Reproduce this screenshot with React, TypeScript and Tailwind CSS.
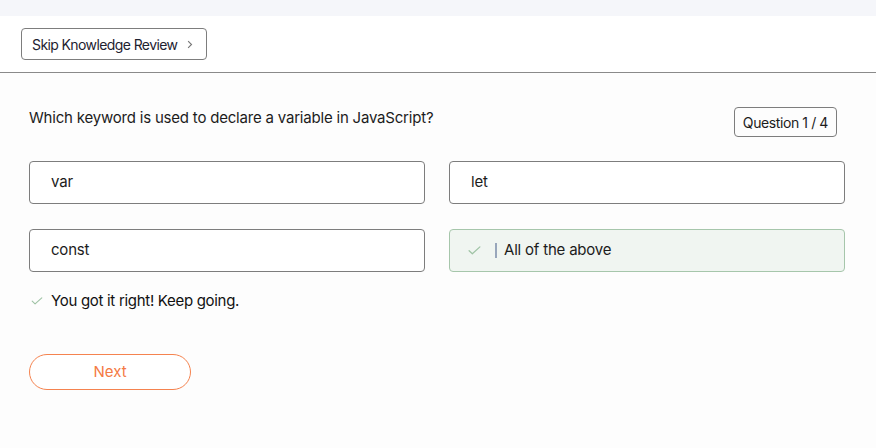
import React from 'react';

const options = [
  { label: 'var', correct: false },
  { label: 'let', correct: false },
  { label: 'const', correct: false },
  { label: 'All of the above', correct: true },
];

function Check({ className }: { className?: string }) {
  return (
    <svg viewBox="0 0 14 10" className={className} fill="none" stroke="currentColor" strokeWidth={1.4}>
      <path d="M1 5.2l3.6 3.4L13 1" strokeLinecap="round" strokeLinejoin="round" />
    </svg>
  );
}

export default function App() {
  return (
    <div className="w-[876px] h-[448px] bg-[#fdfdfd] text-[#1c1c1c]" style={{ fontFamily: 'Inter, "Noto Sans", sans-serif' }}>
      <div className="h-4 bg-[#f5f6fa]" />
      <div className="h-[57px] bg-white flex items-center px-[21px] border-b border-[#8a8a8a]">
        <button className="h-[32px] flex items-center gap-[10px] pl-[10px] pr-[13px] border border-[#7d7d7d] rounded-[4px] text-[14px] tracking-[-0.6px] text-[#1e2230]">
          Skip Knowledge Review
          <svg viewBox="0 0 8 12" className="w-[6px] h-[9px] text-[#777]" fill="none" stroke="currentColor" strokeWidth={1.5}>
            <path d="M1.5 1.5L6 6l-4.5 4.5" />
          </svg>
        </button>
      </div>

      <div className="px-[29px] pt-[34px]">
        <div className="flex items-start justify-between pr-[10px]">
          <p className="text-[15px] tracking-[-0.2px] mt-[1px] leading-[20px]">
            Which keyword is used to declare a variable in JavaScript?
          </p>
          <span className="h-[30px] px-[8px] flex items-center border border-[#7d7d7d] rounded-[4px] text-[14px] tracking-[-0.4px]">
            Question 1 / 4
          </span>
        </div>

        <div className="grid grid-cols-2 gap-x-[24px] gap-y-[25px] mt-[24px] w-[816px]">
          {options.map((o) =>
            o.correct ? (
              <div
                key={o.label}
                className="h-[43px] flex items-center pl-[18px] border border-[#a6c6ab] bg-[#f0f5f1] rounded-[4px] text-[15px] tracking-[-0.2px]"
              >
                <Check className="w-[13px] h-[9px] text-[#9fc3a5]" />
                <span className="w-[2px] h-[15px] bg-[#98a6bb] ml-[14px] mr-[7px]" />
                {o.label}
              </div>
            ) : (
              <div
                key={o.label}
                className="h-[43px] flex items-center pl-[21px] border border-[#7d7d7d] bg-white rounded-[4px] text-[15px] tracking-[-0.2px]"
              >
                {o.label}
              </div>
            )
          )}
        </div>

        <div className="flex items-center mt-[20px] h-[18px]">
          <Check className="w-[12px] h-[8px] text-[#9fc3a5] ml-[2px]" />
          <span className="ml-[8px] text-[15px] tracking-[-0.3px] text-[#111]">You got it right! Keep going.</span>
        </div>

        <button className="mt-[44px] w-[162px] h-[36px] rounded-full border border-[#f5834f] text-[#f47a44] text-[15px] bg-white">
          Next
        </button>
      </div>
    </div>
  );
}
